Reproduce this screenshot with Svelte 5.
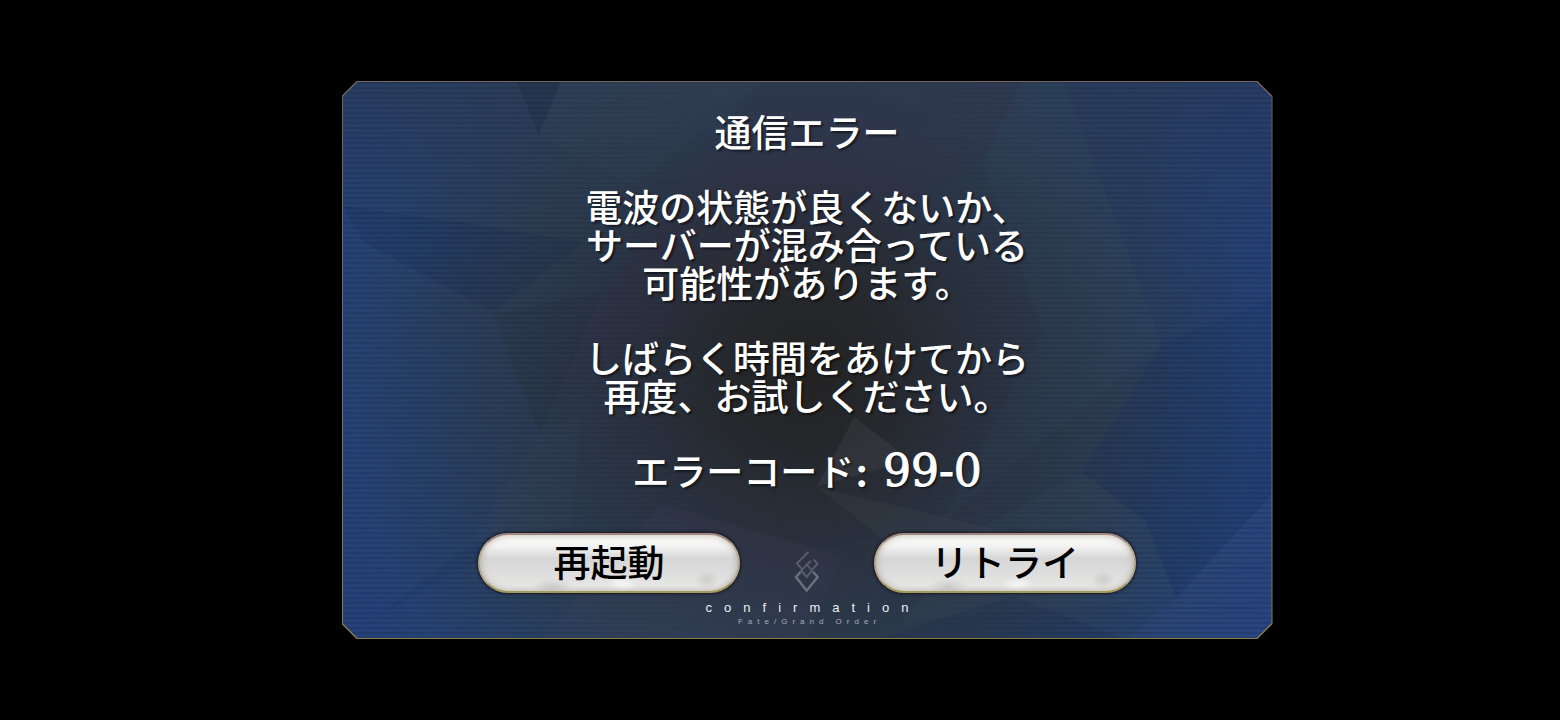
<script lang="ts">
	export let title = '通信エラー';
	export let errorCode = '99-0';

	// facets of the polygon backdrop, drawn in a 930 x 556 box
	const facets = [
		{ points: '174,0 218,0 196,52', fill: '#000', opacity: 0.1 },
		{ points: '218,0 420,0 290,105 196,52', fill: '#5c8a86', opacity: 0.04 },
		{ points: '0,124 130,142 240,160 150,230 20,160', fill: '#001040', opacity: 0.1 },
		{ points: '420,0 360,70 250,230 210,310 330,250 640,80 690,0', fill: '#402848', opacity: 0.1 },
		{ points: '150,232 170,290 197,352 90,556 30,540 0,320', fill: '#28509a', opacity: 0.05 },
		{ points: '150,232 260,210 197,352', fill: '#000', opacity: 0.04 },
		{ points: '197,352 240,330 228,445 120,470', fill: '#5c8a96', opacity: 0.04 },
		{ points: '20,545 130,460 228,445 110,490', fill: '#001040', opacity: 0.06 },
		{ points: '318,422 458,462 500,475 465,556 200,556', fill: '#5a5078', opacity: 0.1 },
		{ points: '512,335 568,378 474,405', fill: '#7a707a', opacity: 0.14 },
		{ points: '474,405 640,444 700,460 570,480', fill: '#66706e', opacity: 0.1 },
		{ points: '678,0 722,0 820,262 600,440 700,250 640,80', fill: '#4a7896', opacity: 0.06 },
		{ points: '722,0 930,0 930,220 820,262', fill: '#203080', opacity: 0.08 },
		{ points: '930,218 820,262 740,390 804,440 834,516 930,412', fill: '#001c70', opacity: 0.1 },
		{ points: '740,390 804,440 834,516 560,540 630,450', fill: '#607080', opacity: 0.05 },
		{ points: '930,412 834,516 786,556 930,556', fill: '#5060b0', opacity: 0.1 },
		{ points: '540,556 670,514 780,556', fill: '#001040', opacity: 0.1 }
	];
</script>

<main class="screen">
	<div class="dialog" role="alertdialog" aria-labelledby="title" aria-describedby="message">
		<div class="backdrop" aria-hidden="true">
			<svg viewBox="0 0 930 556" preserveAspectRatio="none">
				{#each facets as facet}
					<polygon points={facet.points} fill={facet.fill} fill-opacity={facet.opacity} />
				{/each}
			</svg>
			<div class="scanlines"></div>
		</div>

		<div class="content">
			<div class="text">
				<h1 id="title">{title}</h1>
				<p id="message">
					電波の状態が良くないか、<br />
					サーバーが混み合っている<br />
					可能性があります。
				</p>
				<p>
					しばらく時間をあけてから<br />
					再度、お試しください。
				</p>
				<p>エラーコード<span class="code">: {errorCode}</span></p>
			</div>

			<div class="actions">
				<button type="button">再起動</button>
				<svg class="crest" viewBox="0 0 76 126" aria-hidden="true">
					<path d="M42 3 L8 37 L24 56" />
					<path d="M37 42 L50 29" />
					<path d="M58 25 L69 38 L54 56" />
					<path d="M37 41 L53 59 L37 78 L21 59 Z" />
					<path class="front" d="M19 62 L5 78 L37 119 L70 78 L56 62" />
				</svg>
				<button type="button">リトライ</button>
			</div>

			<div class="caption">confirmation</div>
			<div class="subcaption">Fate/Grand Order</div>
		</div>
	</div>
</main>

<style>
	:global(body) {
		background: #000;
	}

	.screen {
		display: flex;
		align-items: center;
		justify-content: center;
		box-sizing: border-box;
		min-height: 100vh;
		padding-left: 54px;
		font-family: "Noto Sans CJK JP", sans-serif;
	}

	.dialog {
		--cut: polygon(15px 0, calc(100% - 15px) 0, 100% 15px, 100% calc(100% - 15px), calc(100% - 15px) 100%, 15px 100%, 0 calc(100% - 15px), 0 15px);
		position: relative;
		width: 100%;
		max-width: 931px;
		background: linear-gradient(#75645f, #6d6e78 50%, #8a7e48);
		clip-path: var(--cut);
	}

	.backdrop {
		position: absolute;
		inset: 1px;
		background:
			linear-gradient(rgba(44, 58, 78, 0.6), transparent 30%),
			radial-gradient(ellipse 58% 100% at 50% 52%, #242323 0, #25272b 14%, #2a3240 34%, #2c3d52 58%, #27426f 82%, #24417c 100%);
		clip-path: var(--cut);
	}

	.backdrop svg {
		display: block;
		width: 100%;
		height: 100%;
	}

	.scanlines {
		position: absolute;
		inset: 0;
		background: repeating-linear-gradient(rgba(0, 8, 40, 0.12) 0 2px, transparent 2px 5px);
		mask-image: linear-gradient(90deg, #000 15%, transparent 40%, transparent 62%, #000 85%);
	}

	.content {
		position: relative;
		display: flex;
		flex-direction: column;
		align-items: center;
		padding: 31px 16px 12px;
	}

	.text {
		display: flex;
		flex-direction: column;
		gap: 37px;
		color: #fff;
		font-size: 37px;
		font-weight: 500;
		line-height: 38px;
		text-align: center;
		text-shadow: 2px 2px 2px rgba(0, 0, 0, 0.5);
	}

	h1,
	p {
		margin: 0;
		font-size: inherit;
		font-weight: inherit;
	}

	.code {
		font-family: "DejaVu Serif", serif;
		font-size: 44px;
		font-weight: 400;
		line-height: 1px;
		-webkit-text-stroke: 1px #fff;
	}

	.actions {
		display: flex;
		align-items: flex-end;
		justify-content: center;
		gap: 54px;
		margin-top: 44px;
	}

	button {
		width: 262px;
		height: 60px;
		padding: 0 0 4px;
		border: 2px solid;
		border-color: #a08780 #b5a890 #a39a62;
		border-radius: 30px;
		background:
			radial-gradient(ellipse 20px 8px at 28% 92%, rgba(190, 190, 190, 0.6), transparent),
			radial-gradient(ellipse 16px 8px at 55% 88%, rgba(255, 255, 255, 0.7), transparent),
			radial-gradient(ellipse 12px 9px at 88% 80%, rgba(195, 195, 195, 0.7), transparent),
			linear-gradient(#fafafa 0, #f3f3f3 20%, #d6d6d6 42%, #dedede 70%, #eaeae8 100%);
		box-shadow: 0 0 3px 1px rgba(20, 16, 20, 0.8), inset 0 0 6px rgba(130, 110, 80, 0.5);
		color: #000;
		font-family: inherit;
		font-size: 37px;
		font-weight: 500;
		line-height: 50px;
		cursor: pointer;
	}

	.crest {
		width: 26px;
		height: 42px;
		fill: none;
		stroke: #565e69;
		stroke-width: 6;
	}

	.crest .front {
		stroke: #6c747d;
		stroke-width: 7;
	}

	.caption {
		margin-top: 8px;
		padding-left: 12px;
		color: #eceef2;
		font-family: "Liberation Sans", Arial, sans-serif;
		font-size: 13px;
		line-height: 14px;
		letter-spacing: 12px;
	}

	.subcaption {
		margin-top: 2px;
		padding-left: 5px;
		color: #a8aeb8;
		font-family: "Liberation Sans", Arial, sans-serif;
		font-size: 8px;
		line-height: 10px;
		letter-spacing: 5px;
	}
</style>
